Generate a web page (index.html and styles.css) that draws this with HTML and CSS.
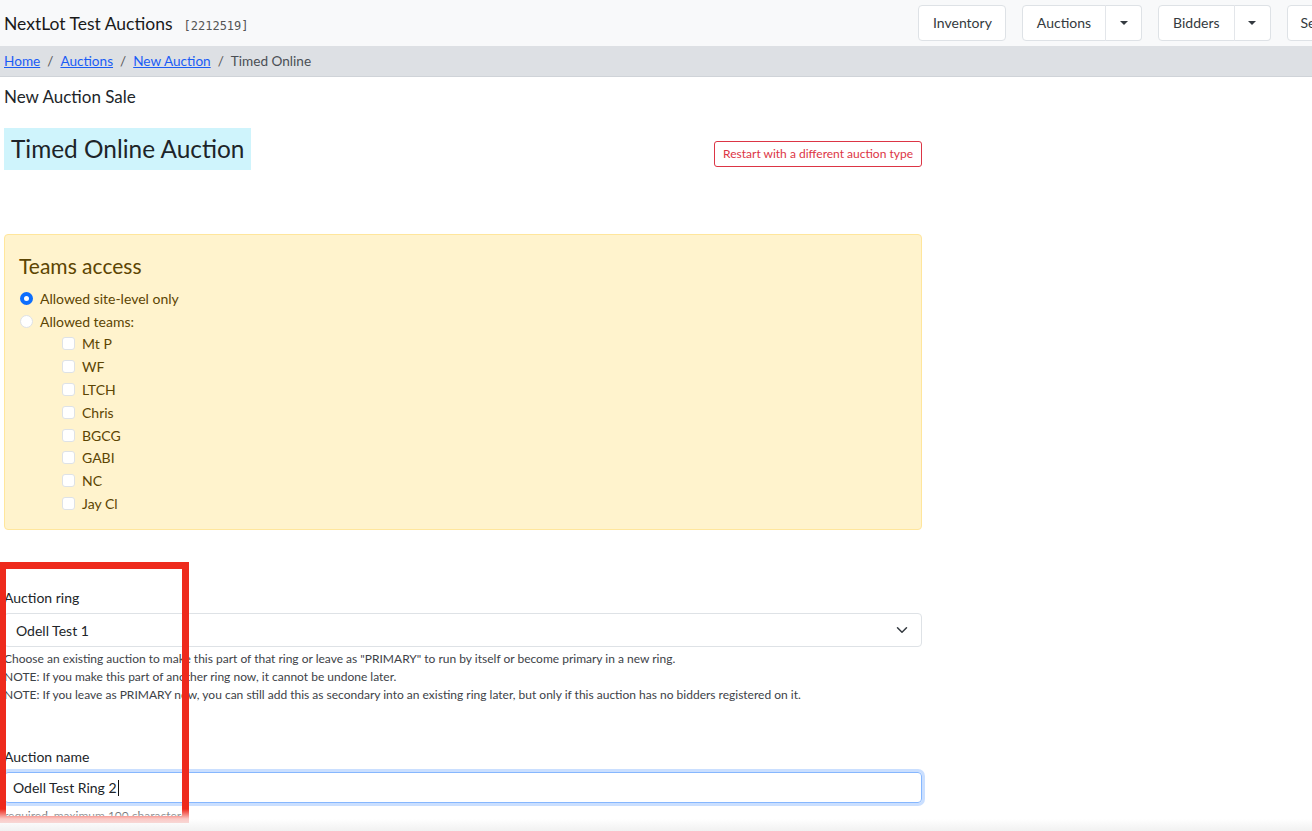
FILE: index.html
```html
<!DOCTYPE html>
<html lang="en">
<head>
<meta charset="utf-8">
<title>New Auction Sale</title>
<link rel="stylesheet" href="styles.css">
</head>
<body>
<header class="navbar">
  <div class="brand">
    <span class="brand-name">NextLot Test Auctions</span>
    <span class="brand-id">[2212519]</span>
  </div>
  <nav class="nav-buttons">
    <button class="btn btn-inventory">Inventory</button>
    <div class="btn-group">
      <button class="btn btn-main">Auctions</button>
      <button class="btn btn-caret"><span class="caret"></span></button>
    </div>
    <div class="btn-group">
      <button class="btn btn-main">Bidders</button>
      <button class="btn btn-caret"><span class="caret"></span></button>
    </div>
    <button class="btn">Settings</button>
  </nav>
</header>
<div class="breadcrumb">
  <a href="#">Home</a><span class="sep">/</span><a href="#">Auctions</a><span class="sep">/</span><a href="#">New Auction</a><span class="sep">/</span><span class="current">Timed Online</span>
</div>
<main class="page">
  <div class="page-title">New Auction Sale</div>
  <div class="title-row">
    <h1 class="type-badge">Timed Online Auction</h1>
    <button class="btn-restart">Restart with a different auction type</button>
  </div>

  <section class="teams-card">
    <h2 class="teams-title">Teams access</h2>
    <label class="radio-row"><span class="radio checked"></span>Allowed site-level only</label>
    <label class="radio-row"><span class="radio"></span>Allowed teams:</label>
    <div class="team-list">
      <label class="check-row"><span class="check"></span>Mt P</label>
      <label class="check-row"><span class="check"></span>WF</label>
      <label class="check-row"><span class="check"></span>LTCH</label>
      <label class="check-row"><span class="check"></span>Chris</label>
      <label class="check-row"><span class="check"></span>BGCG</label>
      <label class="check-row"><span class="check"></span>GABI</label>
      <label class="check-row"><span class="check"></span>NC</label>
      <label class="check-row"><span class="check"></span>Jay Cl</label>
    </div>
  </section>

  <div class="field field-ring">
    <label class="field-label">Auction ring</label>
    <div class="select">
      <span>Odell Test 1</span>
      <svg class="chevron" width="12" height="12" viewBox="0 0 16 16"><path d="M2 5l6 6 6-6" fill="none" stroke="#343a40" stroke-width="2" stroke-linecap="round" stroke-linejoin="round"/></svg>
    </div>
    <div class="help">
      <div>Choose an existing auction to make this part of that ring or leave as "PRIMARY" to run by itself or become primary in a new ring.</div>
      <div>NOTE: If you make this part of another ring now, it cannot be undone later.</div>
      <div>NOTE: If you leave as PRIMARY now, you can still add this as secondary into an existing ring later, but only if this auction has no bidders registered on it.</div>
    </div>
  </div>

  <div class="field field-name">
    <label class="field-label">Auction name</label>
    <div class="input focused"><span>Odell Test Ring 2</span><span class="cursor"></span></div>
    <div class="help">required, maximum 100 characters</div>
  </div>
</main>
<div class="highlight-box"></div>
<div class="bottom-fade"></div>
</body>
</html>
```

FILE: styles.css
```css
* { box-sizing: border-box; }
html, body { margin: 0; padding: 0; }
body {
  font-family: Lato, "Open Sans", Arial, sans-serif;
  color: #212529;
  background: #fff;
  width: 1312px;
  height: 831px;
  overflow: hidden;
  position: relative;
}

.navbar {
  height: 46px;
  background: #f8f9fa;
  display: flex;
  align-items: center;
  overflow: hidden;
}
.brand {
  flex: 0 0 918px;
  padding-left: 4px;
  display: flex;
  align-items: baseline;
}
.brand-name { font-size: 17.5px; color: #1a1a1a; }
.brand-id {
  font-family: "DejaVu Sans Mono", "Liberation Mono", monospace;
  font-size: 12px;
  color: #555;
  margin-left: 11px;
}
.nav-buttons {
  display: flex;
  gap: 16px;
  flex-shrink: 0;
  margin-top: -1px;
}
.btn {
  font-family: Lato, Arial, sans-serif;
  font-size: 14px;
  color: #343a40;
  background: #fff;
  border: 1px solid #dee2e6;
  border-radius: 4px;
  height: 36px;
  padding: 0 13px;
  cursor: pointer;
}
.btn-inventory { padding: 0 13px 0 14px; }
.btn-group { display: flex; }
.btn-main { border-top-right-radius: 0; border-bottom-right-radius: 0; padding: 0 14px; }
.btn-caret {
  border-left: 1px solid #e3e6ea;
  border-top-left-radius: 0; border-bottom-left-radius: 0;
  margin-left: -1px;
  width: 37px;
  padding: 0;
  display: flex; align-items: center; justify-content: center;
}
.caret {
  width: 0; height: 0;
  border-left: 4px solid transparent;
  border-right: 4px solid transparent;
  border-top: 4px solid #343a40;
}

.breadcrumb {
  height: 31px;
  background: #dde0e4;
  border-bottom: 1px solid #cfd3d8;
  padding-left: 4px;
  padding-bottom: 1px;
  display: flex;
  align-items: center;
  font-size: 13.6px;
  color: #4a4f55;
}
.breadcrumb a { color: #1a5cf5; text-decoration: underline; }
.breadcrumb .sep { margin: 0 7px; color: #555; }

.page { padding: 0 390px 0 4px; }
.page-title { font-size: 17px; margin-top: 9px; height: 22px; line-height: 22px; }
.title-row {
  display: flex;
  justify-content: space-between;
  align-items: center;
  margin-top: 20px;
}
.type-badge {
  margin: 0;
  font-weight: 400;
  font-size: 24.4px;
  line-height: 42px;
  height: 42px;
  padding: 0 7px;
  background: #cff4fc;
  color: #1d2429;
}
.btn-restart {
  font-family: Lato, Arial, sans-serif;
  font-size: 12px;
  color: #dc3545;
  background: #fff;
  border: 1px solid #dc3545;
  border-radius: 3px;
  height: 26px;
  padding: 0 8px;
  margin-top: 9px;
}

.teams-card {
  margin-top: 64px;
  background: #fff3cd;
  border: 1px solid #ffe69c;
  border-radius: 4px;
  color: #664d03;
  padding: 18px 14px 13px;
  height: 296px;
}
.teams-title { margin: 0 0 8px; font-weight: 400; font-size: 21px; line-height: 26px; color: #5c4503; }
.radio-row, .check-row {
  display: flex;
  align-items: center;
  height: 23px;
  font-size: 14px;
  color: #5c4503;
}
.check-row { height: 22.9px; }
.radio {
  width: 13px; height: 13px;
  border-radius: 50%;
  border: 1px solid #dee2e6;
  background: #fff;
  margin: 0 7px 0 1px;
}
.radio.checked { border: 4px solid #0d6efd; background: #fff; }
.team-list { padding-left: 43px; margin-top: -1px; }
.check {
  width: 13px; height: 13px;
  border-radius: 3px;
  border: 1px solid #dee2e6;
  background: #fff;
  margin-right: 7px;
}

.field-label { display: block; font-size: 14px; height: 20px; line-height: 20px; }
.field-ring { margin-top: 58px; }
.select {
  margin-top: 5px;
  height: 34px;
  border: 1px solid #dee2e6;
  border-radius: 4px;
  display: flex;
  align-items: center;
  justify-content: space-between;
  padding: 0 13px 0 11px;
  font-size: 14px;
}
.help { font-size: 12px; line-height: 18px; color: #3d4247; margin-top: 3px; }
.field-name { margin-top: 43px; }
.input {
  margin-top: 5px;
  height: 31px;
  border: 1px solid #86b7fe;
  border-radius: 4px;
  box-shadow: 0 0 0 3px rgba(13, 110, 253, 0.22);
  display: flex;
  align-items: center;
  padding: 0 8px;
  font-size: 14px;
}
.cursor { display: inline-block; width: 1px; height: 16px; background: #111; margin-left: 1px; }
.field-name .help { margin-top: 4px; }

.highlight-box {
  position: absolute;
  left: -1px;
  top: 562px;
  width: 190px;
  height: 261px;
  border: 7px solid #ee2a1d;
  pointer-events: none;
}
.bottom-fade {
  position: absolute;
  left: 0; right: 0; bottom: 0;
  height: 22px;
  background: linear-gradient(to bottom, rgba(255,255,255,0), rgba(255,255,255,0.75) 45%, #f1f1f1);
  pointer-events: none;
}
```
